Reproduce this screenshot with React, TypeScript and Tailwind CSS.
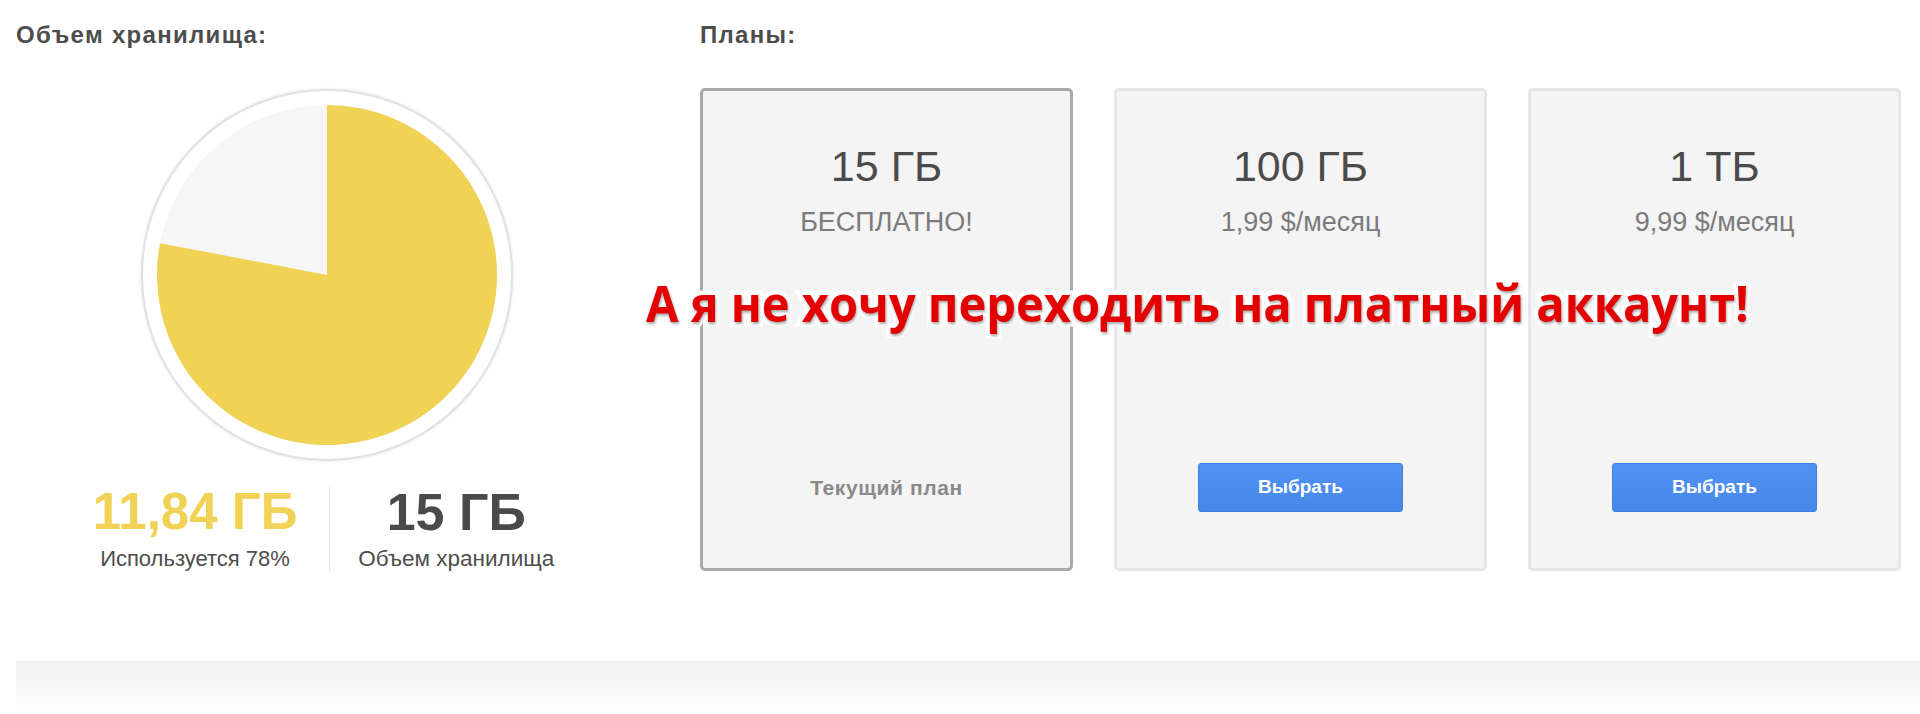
import clsx from 'clsx'

interface Plan {
  id: string
  size: string
  price: string
  current?: boolean
}

const plans: Plan[] = [
  { id: 'free', size: '15 ГБ', price: 'БЕСПЛАТНО!', current: true },
  { id: '100', size: '100 ГБ', price: '1,99 $/месяц' },
  { id: '1tb', size: '1 ТБ', price: '9,99 $/месяц' },
]

const used = 0.78

function Pie() {
  const r = 170
  const a = used * Math.PI * 2
  const x = r + r * Math.sin(a)
  const y = r - r * Math.cos(a)
  return (
    <div className="w-[372px] h-[372px] rounded-full bg-white border-2 border-[#e2e2e2] shadow-[0_0_3px_rgba(0,0,0,0.12)] flex items-center justify-center">
      <svg width="340" height="340" viewBox="0 0 340 340">
        <circle cx={r} cy={r} r={r} fill="#f6f6f6" />
        <path d={`M${r},${r} L${r},0 A${r},${r} 0 1 1 ${x.toFixed(2)},${y.toFixed(2)} Z`} fill="#f0d255" />
      </svg>
    </div>
  )
}

function PlanCard({ plan }: { plan: Plan }) {
  return (
    <div
      className={clsx(
        'w-[373px] h-[483px] rounded-[5px] border-[3px] bg-[#f4f4f4] flex flex-col items-center pt-[51px] pb-[56px]',
        plan.current ? 'border-[#a9a9a9]' : 'border-[#e6e6e6]'
      )}
    >
      <div className="text-[43px] leading-[48px] text-[#4b4b4b]">{plan.size}</div>
      <div className="mt-[16px] text-[27px] leading-[32px] text-[#7b7b7b]">{plan.price}</div>
      <div className="mt-auto h-[49px] flex items-center justify-center">
        {plan.current ? (
          <span className="text-[21px] font-bold tracking-[0.6px] text-[#8a8a8a]">Текущий план</span>
        ) : (
          <button className="w-[205px] h-[49px] rounded-[3px] border border-[#3f7fe4] bg-linear-to-b from-[#5192f5] to-[#4887ea] text-white text-[19px] font-bold">
            Выбрать
          </button>
        )}
      </div>
    </div>
  )
}

export default function App() {
  return (
    <div className="relative w-[1920px] h-[714px] overflow-hidden bg-white font-['Liberation_Sans',Arial,sans-serif]">
      <div className="h-[661px] flex px-4 pt-[22px]">
        <div className="w-[622px] flex flex-col items-center">
          <h2 className="self-start text-[24px] leading-[26px] font-bold tracking-[1.3px] text-[#4d4d4d]">Объем хранилища:</h2>
          <div className="mt-[41px]">
            <Pie />
          </div>
          <div className="mt-[26px] flex items-stretch pr-[7px]">
            <div className="pr-[32px] flex flex-col items-center">
              <div className="text-[51px] leading-[50px] font-bold text-[#f0d255]">11,84 ГБ</div>
              <div className="mt-[9px] text-[22px] leading-[26px] text-[#4d4d4d]">Используется 78%</div>
            </div>
            <div className="w-px bg-[#e0e0e0]" />
            <div className="pl-[28px] flex flex-col items-center">
              <div className="text-[52px] leading-[50px] font-bold text-[#4a4a4a]">15 ГБ</div>
              <div className="mt-[9px] text-[22.5px] leading-[26px] text-[#4d4d4d]">Объем хранилища</div>
            </div>
          </div>
        </div>

        <div className="ml-[62px] flex flex-col">
          <h2 className="text-[24px] leading-[26px] font-bold tracking-[1.3px] text-[#4d4d4d]">Планы:</h2>
          <div className="mt-10 flex gap-[41px]">
            {plans.map(p => (
              <PlanCard key={p.id} plan={p} />
            ))}
          </div>
        </div>
      </div>

      <div className="ml-4 h-[53px] bg-linear-to-b from-[#f2f2f2] to-[#fefefe]" />

      <div className="absolute left-[646px] top-[278px] origin-left scale-x-[0.94] whitespace-nowrap font-['Open_Sans',sans-serif] font-bold text-[50px] leading-none text-[#e40000] [-webkit-text-stroke:9px_#ffffff] [paint-order:stroke_fill] [text-shadow:1px_2px_3px_rgba(0,0,0,0.35)]">
        А я не хочу переходить на платный аккаунт!
      </div>
    </div>
  )
}
